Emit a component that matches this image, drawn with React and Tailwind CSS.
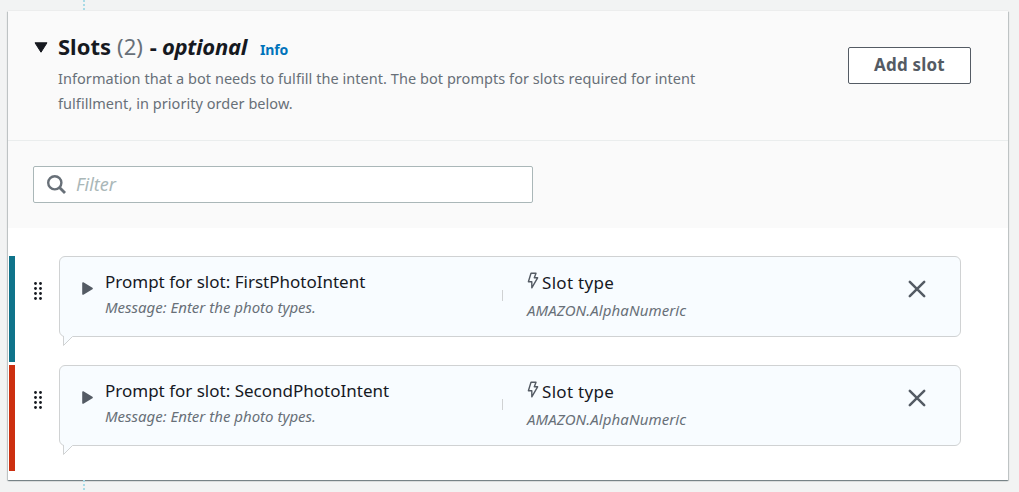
const slots = [
  { name: 'FirstPhotoIntent', bar: 'bg-[#0f738a]' },
  { name: 'SecondPhotoIntent', bar: 'bg-[#cc2f10]' },
];

function DragHandle() {
  return (
    <svg className="mt-[26px] ml-[19px] h-[19px] w-[9px] shrink-0" viewBox="0 0 9 19" fill="#16191f">
      {[1.5, 6.5, 11.5, 16.5].map((y) => (
        <g key={y}>
          <circle cx="1.5" cy={y} r="1.4" />
          <circle cx="6.5" cy={y} r="1.4" />
        </g>
      ))}
    </svg>
  );
}

function SlotRow({ slot }) {
  return (
    <div className="flex h-[106px]">
      <div className={`w-[6px] shrink-0 ${slot.bar}`} />
      <DragHandle />
      <div className="relative ml-4 flex h-[81px] w-[902px] rounded-[6px] border border-[#d0d2d3] bg-[#f8fcff]">
        <svg className="absolute top-[78px] left-[3px] h-3 w-3" viewBox="0 0 12 12">
          <path d="M0.5 0V10.5L9.5 1.5V0Z" fill="#f8fcff" />
          <path d="M0.5 1V10.5L9.5 1.5" fill="none" stroke="#d0d2d3" />
        </svg>
        <svg className="mt-[25px] ml-[22px] h-[13px] w-[11px] shrink-0" viewBox="0 0 11 13">
          <path d="M1 1L10 6.5L1 12Z" fill="#545b64" stroke="#545b64" strokeWidth="1.6" strokeLinejoin="round" />
        </svg>
        <div className="ml-[12px] w-[397px] shrink-0 whitespace-nowrap">
          <div className="mt-[13px] text-[17px] leading-6 text-[#16191f]">Prompt for slot: {slot.name}</div>
          <div className="mt-[2px] text-[15px] leading-[22px] text-[#687078] italic">Message: Enter the photo types.</div>
        </div>
        <div className="mt-[33px] h-[11px] w-px shrink-0 bg-[#d0d2d3]" />
        <div className="ml-[24px] w-[381px] shrink-0 whitespace-nowrap">
          <div className="mt-[14px] flex text-[17px] leading-6 tracking-[0.3px] text-[#16191f]">
            <svg className="mt-px mr-[3px] h-[18px] w-[12px]" viewBox="0 0 12 18" fill="none" stroke="#545b64" strokeWidth="1.4" strokeLinejoin="round">
              <path d="M4 1.2H9L7.3 5.8H10.6L4.8 15.8V9.8H1.4Z" />
            </svg>
            Slot type
          </div>
          <div className="mt-[4px] text-[15px] leading-[22px] tracking-[0.1px] text-[#687078] italic">AMAZON.AlphaNumeric</div>
        </div>
        <svg className="mt-[23px] h-[18px] w-[18px] shrink-0" viewBox="0 0 18 18" fill="none" stroke="#545b64" strokeWidth="2.5" strokeLinecap="round">
          <path d="M1.8 1.8L16.2 16.2M16.2 1.8L1.8 16.2" />
        </svg>
      </div>
    </div>
  );
}

function Connector({ className }) {
  return (
    <div className={`ml-[83px] flex w-[2px] flex-col gap-[2px] overflow-hidden ${className}`}>
      {[0, 1, 2].map((i) => (
        <div key={i} className="h-[2px] w-[2px] shrink-0 bg-[#a9dbe6]" />
      ))}
    </div>
  );
}

export default function App() {
  return (
    <div className="flex h-[492px] w-[1019px] flex-col overflow-hidden bg-[#f2f3f3] font-['Noto_Sans',sans-serif]">
      <Connector className="h-[11px] shrink-0" />
      <section className="ml-2 h-[469px] w-[1000px] shrink-0 bg-white shadow-[0_0_1px_0_rgba(0,28,36,0.15),0_1px_1px_0_rgba(0,28,36,0.3),1px_1px_1px_0_rgba(0,28,36,0.15),-1px_1px_1px_0_rgba(0,28,36,0.15)]">
        <header className="flex h-[130px] border-b border-[#eaeded] bg-[#fafafa]">
          <svg className="mt-[31px] ml-[26px] h-[11px] w-[14px] shrink-0" viewBox="0 0 14 11">
            <path d="M1 0.8H13L7 10.2Z" fill="#16191f" stroke="#16191f" strokeLinejoin="round" />
          </svg>
          <div className="ml-[10px] w-[790px] shrink-0 whitespace-nowrap">
            <div className="mt-[19px] flex items-baseline text-[22px] leading-8 text-[#16191f]">
              <h2 className="font-bold">Slots</h2>
              <span className="ml-[6px] text-[#687078]">(2)</span>
              <span className="ml-[7px] font-bold tracking-[-0.3px]">- <i>optional</i></span>
              <a className="ml-[13px] text-[14px] font-bold tracking-[-0.1px] text-[#0073bb]">Info</a>
            </div>
            <p className="text-[14.5px] leading-[25px] tracking-[0.05px] text-[#687078]">
              Information that a bot needs to fulfill the intent. The bot prompts for slots required for intent
              <br />
              fulfillment, in priority order below.
            </p>
          </div>
          <button className="mt-[36px] h-[37px] w-[123px] shrink-0 rounded-[2px] border border-[#545b64] bg-white pb-[2px] text-[17px] leading-[32px] font-bold tracking-[0.2px] text-[#545b64]">Add slot</button>
        </header>
        <div className="h-[87px] bg-[#fafafa] pt-[25px] pl-[25px]">
          <div className="flex h-[37px] w-[500px] items-center rounded-[2px] border border-[#aab7b8] bg-white">
            <svg className="ml-[13px] h-[19px] w-[19px]" viewBox="0 0 19 19" fill="none" stroke="#687078" strokeWidth="2.4">
              <circle cx="7.8" cy="7.8" r="6.6" />
              <path d="M12.5 12.5L18 18" strokeWidth="2.8" />
            </svg>
            <span className="mb-[2px] ml-[10px] text-[18px] leading-6 text-[#aab7b8] italic">Filter</span>
          </div>
        </div>
        <div className="flex flex-col gap-[3px] pt-[28px] pl-px">
          {slots.map((s) => (
            <SlotRow key={s.name} slot={s} />
          ))}
        </div>
      </section>
      <Connector className="h-[12px] shrink-0" />
    </div>
  );
}
